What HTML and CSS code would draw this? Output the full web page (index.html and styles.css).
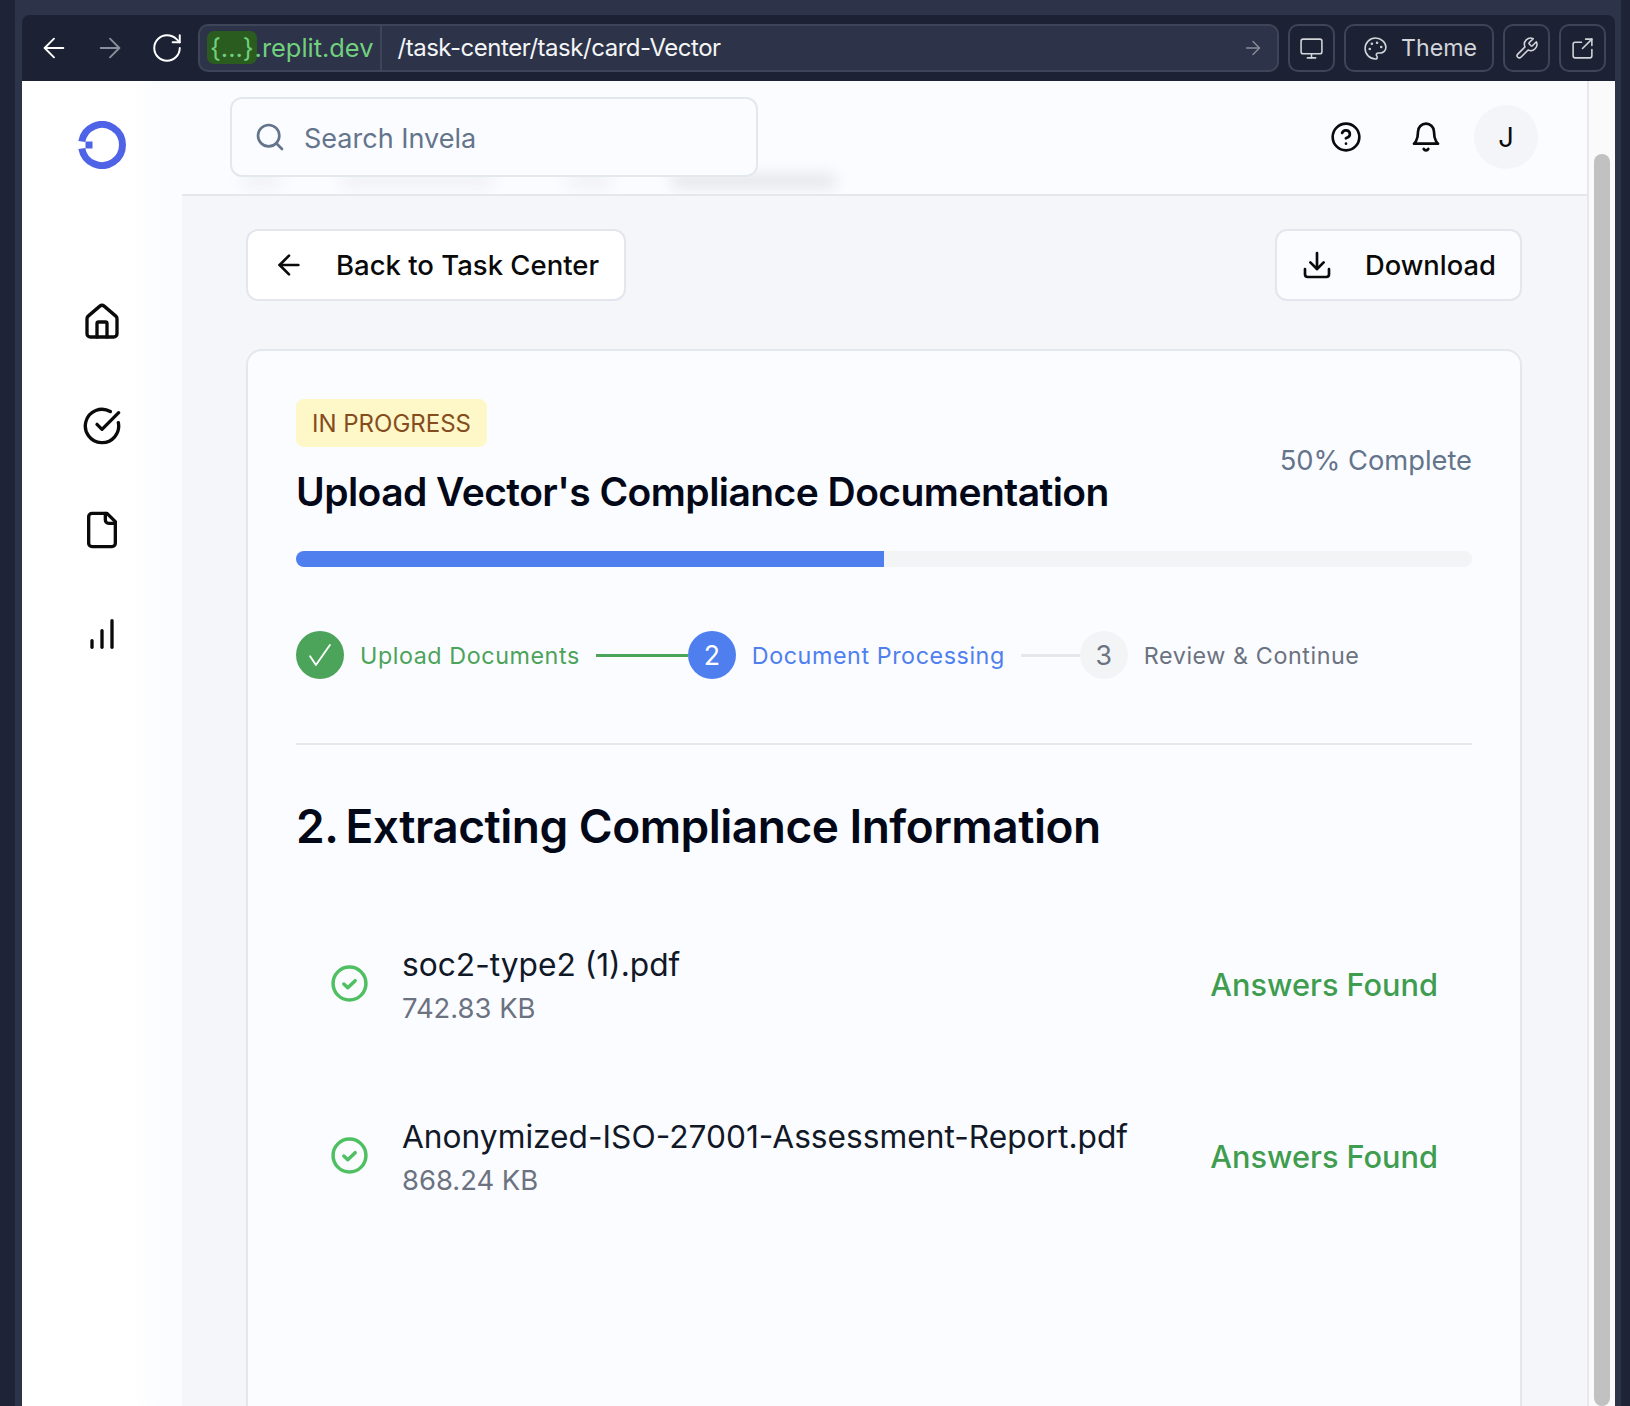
FILE: index.html
```html
<!DOCTYPE html>
<html>
  <head>
    <title>Invela - Task</title>
    <link rel="stylesheet" href="styles.css">
  </head>
  <body>
    <div class="window">
      <div class="toolbar">
        <svg class="nav-icon" viewBox="0 0 24 24"><path d="M19 12H5"/><path d="m12 19-7-7 7-7"/></svg>
        <svg class="nav-icon dim" viewBox="0 0 24 24"><path d="M5 12h14"/><path d="m12 5 7 7-7 7"/></svg>
        <svg class="nav-icon reload" viewBox="0 0 24 24"><path d="M21 12a9 9 0 1 1-9-9c2.52 0 4.93 1 6.74 2.74L21 8"/><path d="M21 3v5h-5"/></svg>
        <div class="urlbar">
          <div class="host"><span class="host-badge">{...}</span>.replit.dev</div>
          <div class="path">/task-center/task/card-Vector</div>
          <svg class="go-icon" viewBox="0 0 24 24"><path d="M5 12h14"/><path d="m12 5 7 7-7 7"/></svg>
        </div>
        <div class="tool-btn">
          <svg viewBox="0 0 24 24"><rect width="20" height="14" x="2" y="3" rx="2"/><path d="M8 21h8"/><path d="M12 17v4"/></svg>
        </div>
        <div class="tool-btn theme-btn">
          <svg viewBox="0 0 24 24"><circle cx="13.5" cy="6.5" r=".5" fill="currentColor"/><circle cx="17.5" cy="10.5" r=".5" fill="currentColor"/><circle cx="8.5" cy="7.5" r=".5" fill="currentColor"/><circle cx="6.5" cy="12.5" r=".5" fill="currentColor"/><path d="M12 2C6.5 2 2 6.5 2 12s4.5 10 10 10c.926 0 1.648-.746 1.648-1.688 0-.437-.18-.835-.437-1.125-.29-.289-.438-.652-.438-1.125a1.64 1.64 0 0 1 1.668-1.668h1.996c3.051 0 5.555-2.503 5.555-5.554C21.965 6.012 17.461 2 12 2z"/></svg>
          <span>Theme</span>
        </div>
        <div class="tool-btn">
          <svg viewBox="0 0 24 24"><path d="M14.7 6.3a1 1 0 0 0 0 1.4l1.6 1.6a1 1 0 0 0 1.4 0l3.77-3.77a6 6 0 0 1-7.94 7.94l-6.91 6.91a2.12 2.12 0 0 1-3-3l6.91-6.91a6 6 0 0 1 7.94-7.94l-3.76 3.76z"/></svg>
        </div>
        <div class="tool-btn">
          <svg viewBox="0 0 24 24"><path d="M21 13v6a2 2 0 0 1-2 2H5a2 2 0 0 1-2-2V8a2 2 0 0 1 2-2h6"/><path d="m21 3-9 9"/><path d="M15 3h6v6"/></svg>
        </div>
      </div>

      <div class="page">
        <aside class="sidebar">
          <svg class="logo" viewBox="0 0 48 48"><path d="M3.8 20.5A20.5 20.5 0 1 1 3.8 27.5"/><rect x="7.5" y="20.5" width="7" height="7" class="logo-notch"/></svg>
          <nav class="side-nav">
            <svg viewBox="0 0 24 24"><path d="M15 21v-8a1 1 0 0 0-1-1h-4a1 1 0 0 0-1 1v8"/><path d="M3 10a2 2 0 0 1 .709-1.528l7-5.999a2 2 0 0 1 2.582 0l7 5.999A2 2 0 0 1 21 10v9a2 2 0 0 1-2 2H5a2 2 0 0 1-2-2z"/></svg>
            <svg viewBox="0 0 24 24"><path d="M21.801 10A10 10 0 1 1 17 3.335"/><path d="m9 11 3 3L22 4"/></svg>
            <svg viewBox="0 0 24 24"><path d="M15 2H6a2 2 0 0 0-2 2v16a2 2 0 0 0 2 2h12a2 2 0 0 0 2-2V7Z"/><path d="M14 2v4a2 2 0 0 0 2 2h4"/></svg>
            <svg viewBox="0 0 24 24"><path d="M12 20V10"/><path d="M18 20V4"/><path d="M6 20v-4"/></svg>
          </nav>
        </aside>

        <div class="main">
          <header class="topbar">
            <div class="blur-row">
              <span></span>
              <span></span>
              <span></span>
              <span></span>
            </div>
            <div class="search">
              <svg viewBox="0 0 24 24"><circle cx="11" cy="11" r="8"/><path d="m21 21-4.3-4.3"/></svg>
              <span>Search Invela</span>
            </div>
            <div class="top-actions">
              <svg viewBox="0 0 24 24"><circle cx="12" cy="12" r="10"/><path d="M9.09 9a3 3 0 0 1 5.83 1c0 2-3 3-3 3"/><path d="M12 17h.01"/></svg>
              <svg viewBox="0 0 24 24"><path d="M6 8a6 6 0 0 1 12 0c0 7 3 9 3 9H3s3-2 3-9"/><path d="M10.3 21a1.94 1.94 0 0 0 3.4 0"/></svg>
              <div class="avatar">J</div>
            </div>
          </header>

          <div class="content">
            <div class="action-row">
              <div class="btn back-btn">
                <svg viewBox="0 0 24 24"><path d="M19 12H5"/><path d="m12 19-7-7 7-7"/></svg>
                <span>Back to Task Center</span>
              </div>
              <div class="btn download-btn">
                <svg viewBox="0 0 24 24"><path d="M21 15v4a2 2 0 0 1-2 2H5a2 2 0 0 1-2-2v-4"/><path d="m7 10 5 5 5-5"/><path d="M12 15V3"/></svg>
                <span>Download</span>
              </div>
            </div>

            <section class="card">
              <div class="card-head">
                <div>
                  <div class="status">IN PROGRESS</div>
                  <h1>Upload Vector's Compliance Documentation</h1>
                </div>
                <div class="percent">50% Complete</div>
              </div>

              <div class="progress"><div class="progress-fill" style="width:50%"></div></div>

              <div class="steps">
                <div class="step-dot done">
                  <svg viewBox="0 0 24 24"><path d="M3.5 13 8.5 20.5 20.5 3.5"/></svg>
                </div>
                <div class="step-label done">Upload Documents</div>
                <div class="step-line done"></div>
                <div class="step-dot active">2</div>
                <div class="step-label active">Document Processing</div>
                <div class="step-line"></div>
                <div class="step-dot">3</div>
                <div class="step-label">Review &amp; Continue</div>
              </div>

              <h2><span class="step-num">2.</span> Extracting Compliance Information</h2>

              <div class="files">
                <div class="file">
                  <svg class="file-check" viewBox="0 0 36 36"><circle cx="18" cy="18" r="16"/><path d="M12.5 18.5l3.8 3.6 7.2-6.8"/></svg>
                  <div class="file-info">
                    <div class="file-name">soc2-type2 (1).pdf</div>
                    <div class="file-size">742.83 KB</div>
                  </div>
                  <div class="file-state">Answers Found</div>
                </div>
                <div class="file">
                  <svg class="file-check" viewBox="0 0 36 36"><circle cx="18" cy="18" r="16"/><path d="M12.5 18.5l3.8 3.6 7.2-6.8"/></svg>
                  <div class="file-info">
                    <div class="file-name">Anonymized-ISO-27001-Assessment-Report.pdf</div>
                    <div class="file-size">868.24 KB</div>
                  </div>
                  <div class="file-state">Answers Found</div>
                </div>
              </div>
            </section>
          </div>
        </div>

        <div class="scrolltrack"><div class="scrollthumb"></div></div>
      </div>
    </div>
  </body>
</html>
```

FILE: styles.css
```css
* {
  box-sizing: border-box;
}

html,
body {
  height: 100%;
}

body {
  margin: 0;
  overflow: hidden;
  background-color: #1e2435;
  font-family: Inter, "Liberation Sans", sans-serif;
}

svg {
  display: block;
  fill: none;
  stroke: currentColor;
  stroke-linecap: round;
  stroke-linejoin: round;
}

.window {
  height: 1406px;
  margin: 0 9px 0 15px;
  padding: 15px 6px 0 7px;
  background-color: #2d3348;
  display: flex;
  flex-direction: column;
}

/* browser bar */
.toolbar {
  height: 66px;
  flex: none;
  display: flex;
  align-items: center;
  padding: 0 9px 0 16px;
  background-color: #1c2233;
  border-radius: 8px 8px 0 0;
  color: #fff;
}

.nav-icon {
  width: 32px;
  height: 32px;
  stroke-width: 1.4;
  flex: none;
  margin-right: 24px;
}

.nav-icon.dim {
  color: #8b8f9b;
}

.nav-icon.reload {
  width: 34px;
  height: 34px;
  margin-right: 14px;
}

.urlbar {
  flex: 1;
  height: 48px;
  display: flex;
  align-items: center;
  background-color: #2d3348;
  border: 2px solid #3f4559;
  border-radius: 10px;
  margin-right: 9px;
  font-size: 24px;
}

.host {
  height: 100%;
  display: flex;
  align-items: center;
  padding: 0 7px 2px;
  font-size: 25.4px;
  color: #71d07e;
  border-right: 2px solid #3f4559;
}

.host-badge {
  height: 33px;
  line-height: 33px;
  margin-right: -2px;
  padding: 0 3px;
  background-color: #2a5c1f;
  border-radius: 7px;
}

.path {
  flex: 1;
  margin-top: -2px;
  padding-left: 15px;
  letter-spacing: -0.47px;
  color: #f4f5f7;
}

.go-icon {
  width: 22px;
  height: 22px;
  margin-right: 13px;
  color: #8b8f9b;
  stroke-width: 1.5;
}

.tool-btn {
  height: 48px;
  min-width: 47px;
  margin-right: 9px;
  display: flex;
  align-items: center;
  justify-content: center;
  border: 2px solid #3f4559;
  border-radius: 10px;
  color: #d3d5da;
  font-size: 23.2px;
}

.tool-btn:last-child {
  margin-right: 0;
}

.tool-btn svg {
  width: 25px;
  height: 25px;
  stroke-width: 1.5;
}

.theme-btn {
  width: 150px;
  justify-content: flex-start;
  padding-left: 17px;
  gap: 13px;
}

/* page */
.page {
  flex: 1;
  min-height: 0;
  overflow: hidden;
  display: flex;
  background-color: #f4f6fa;
}

.sidebar {
  width: 160px;
  flex: none;
  display: flex;
  flex-direction: column;
  align-items: center;
  background: linear-gradient(90deg, #fff 0, #fff 70%, #fbfcff 85%);
}

.logo {
  width: 48px;
  height: 48px;
  margin-top: 40px;
  stroke: #4f63e7;
  stroke-width: 7;
  stroke-linecap: butt;
}

.logo-notch {
  fill: #4f63e7;
  stroke: none;
}

.side-nav {
  margin-top: 133px;
  display: flex;
  flex-direction: column;
  align-items: center;
  gap: 64px;
  color: #0a0a0a;
}

.side-nav svg {
  width: 40px;
  height: 40px;
  stroke-width: 2;
}

.main {
  flex: 1;
  min-width: 0;
  display: flex;
  flex-direction: column;
}

.topbar {
  position: relative;
  height: 115px;
  flex: none;
  overflow: hidden;
  display: flex;
  align-items: flex-start;
  justify-content: space-between;
  padding: 16px 49px 0 48px;
  background-color: #fbfcff;
  border-bottom: 2px solid #e3e8ee;
}

/* page text going blurred behind the header */
.blur-row {
  position: absolute;
  left: 60px;
  top: 93px;
  display: flex;
  filter: blur(7px);
}

.blur-row span {
  height: 14px;
  background-color: #f0f1f5;
  border-radius: 5px;
}

.blur-row span:nth-child(1) {
  width: 39px;
}

.blur-row span:nth-child(2) {
  width: 151px;
  margin-left: 61px;
}

.blur-row span:nth-child(3) {
  width: 44px;
  margin-left: 74px;
}

.blur-row span:nth-child(4) {
  width: 165px;
  margin-left: 60px;
  background-color: #e4e6ea;
}

.search {
  position: relative;
  width: 528px;
  height: 80px;
  display: flex;
  align-items: center;
  gap: 18px;
  padding-left: 22px;
  background-color: #fbfcff;
  border: 2px solid #e3e8ee;
  border-radius: 12px;
  color: #64748b;
  font-size: 27px;
}

.search svg {
  width: 32px;
  height: 32px;
  stroke-width: 2;
}

.search span {
  margin-top: 2px;
}

.top-actions {
  display: flex;
  align-items: center;
  gap: 48px;
  margin-top: 8px;
  color: #0a0a0a;
}

.top-actions svg {
  width: 32px;
  height: 32px;
  stroke-width: 2;
}

.avatar {
  width: 64px;
  height: 64px;
  margin-left: -16px;
  display: flex;
  align-items: center;
  justify-content: center;
  background-color: #f3f5f8;
  border-radius: 50%;
  font-size: 27.3px;
  color: #0a0a0a;
}

.content {
  flex: 1;
  min-height: 0;
  padding: 33px 65px 0 64px;
}

.action-row {
  display: flex;
  justify-content: space-between;
  margin-bottom: 48px;
}

.btn {
  height: 72px;
  display: flex;
  align-items: center;
  background-color: #fff;
  border: 2px solid #e3e6ed;
  border-radius: 12px;
  color: #0a0a0a;
  font-size: 27.5px;
  font-weight: 500;
}

.btn svg {
  width: 32px;
  height: 32px;
  stroke-width: 2;
}

.back-btn {
  width: 380px;
  padding-left: 25px;
  gap: 31px;
}

.download-btn {
  width: 247px;
  padding-left: 24px;
  gap: 32px;
  font-size: 27.3px;
  background-color: #fbfcff;
}

.card {
  height: 1200px;
  padding: 48px 48px 0;
  background-color: #fbfcff;
  border: 2px solid #e3e8ee;
  border-radius: 16px;
}

.card-head {
  display: flex;
  justify-content: space-between;
  align-items: center;
}

.status {
  display: inline-block;
  height: 48px;
  line-height: 50px;
  padding: 0 16px;
  background-color: #fef7c8;
  border-radius: 8px;
  color: #854d1e;
  font-size: 24px;
}

h1 {
  margin: 15px 0 0;
  font-size: 39px;
  line-height: 60px;
  letter-spacing: -0.55px;
  font-weight: 600;
  color: #020817;
}

.percent {
  font-size: 27.3px;
  color: #64748b;
  margin-top: -1px;
}

.progress {
  height: 16px;
  margin-top: 29px;
  background-color: #f3f4f6;
  border-radius: 8px;
  overflow: hidden;
}

.progress-fill {
  height: 100%;
  background-color: #4f7fef;
}

.steps {
  display: flex;
  align-items: center;
  margin-top: 64px;
  padding-bottom: 64px;
  border-bottom: 2px solid #e5e7eb;
}

.step-dot {
  width: 48px;
  height: 48px;
  flex: none;
  display: flex;
  align-items: center;
  justify-content: center;
  border-radius: 50%;
  background-color: #f3f4f6;
  color: #6b7280;
  font-size: 26.7px;
}

.step-dot.done {
  background-color: #4ca35a;
  color: #fff;
}

.step-dot.done svg {
  width: 28px;
  height: 28px;
  stroke-width: 1.6;
}

.step-dot.active {
  background-color: #4f7fef;
  color: #fff;
}

.step-label {
  margin-left: 16px;
  font-size: 23.3px;
  letter-spacing: 0.57px;
  color: #6b7280;
}

.step-label.done {
  color: #4ca35a;
}

.step-label.active {
  color: #4f7fef;
}

.step-line {
  width: 59px;
  height: 3px;
  margin-left: 16px;
  background-color: #e5e7eb;
}

.step-line.done {
  width: 92px;
  background-color: #4ca35a;
}

h2 {
  margin: 45px 0 0;
  font-size: 46px;
  line-height: 72px;
  letter-spacing: -0.5px;
  font-weight: 600;
  color: #020817;
}

.step-num {
  margin-right: -4px;
}

.files {
  margin-top: 83px;
  padding: 0 34px 0 35px;
  display: flex;
  flex-direction: column;
  gap: 92px;
}

.file {
  display: flex;
  align-items: center;
  height: 80px;
}

.file-check {
  width: 37px;
  height: 37px;
  flex: none;
  margin-top: -4px;
  stroke: #4fc062;
  stroke-width: 3.4;
}

.file-info {
  flex: 1;
  margin-left: 34px;
  margin-bottom: -1px;
}

.file-name {
  font-size: 31.7px;
  line-height: 44px;
  color: #111827;
}

.file-size {
  margin-top: 1px;
  font-size: 27.4px;
  line-height: 41px;
  color: #6b7280;
}

.file-state {
  margin-top: -2px;
  font-size: 30.7px;
  font-weight: 450;
  color: #3f9d4f;
}

.scrolltrack {
  width: 28px;
  flex: none;
  padding: 73px 5px 0;
  background-color: #fafafa;
  border-left: 2px solid #e8e8e8;
}

.scrollthumb {
  height: 100%;
  background-color: #c1c1c1;
  border-radius: 8px;
}
```
